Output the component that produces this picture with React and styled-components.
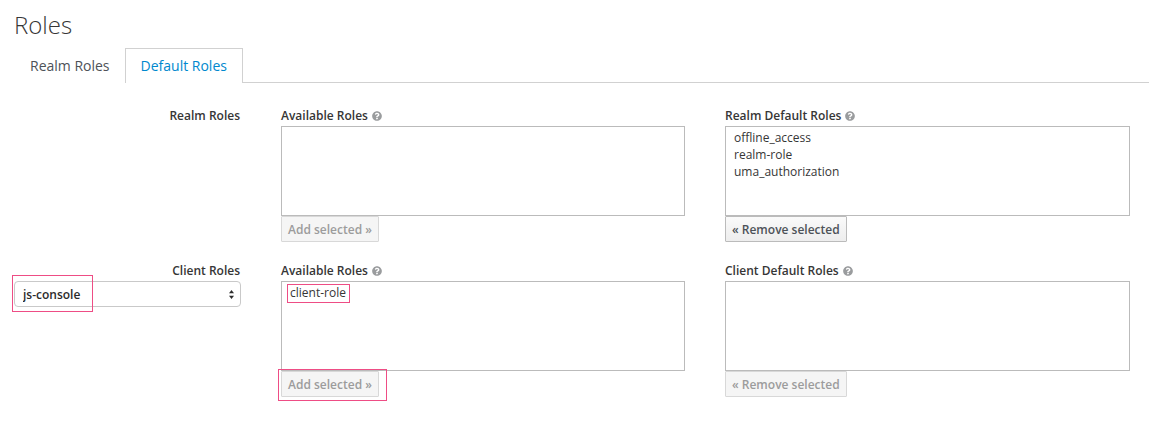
import styled, { createGlobalStyle } from "styled-components";
import { FaQuestionCircle } from "react-icons/fa";

const GlobalStyle = createGlobalStyle`
  body {
    margin: 0;
    background: #fff;
    font-family: "Open Sans", "Liberation Sans", sans-serif;
    color: #363636;
  }
`;

const rows = [
    {
        label: "Realm Roles",
        available: { title: "Available Roles", items: [], action: "Add selected", enabled: false },
        defaults: {
            title: "Realm Default Roles",
            items: ["offline_access", "realm-role", "uma_authorization"],
            action: "Remove selected",
            enabled: true,
        },
    },
    {
        label: "Client Roles",
        client: "js-console",
        available: {
            title: "Available Roles",
            items: ["client-role"],
            action: "Add selected",
            enabled: false,
            marked: true,
        },
        defaults: { title: "Client Default Roles", items: [], action: "Remove selected", enabled: false },
    },
];

function SelectArrows() {
    return (
        <ArrowIcon width="7" height="11" viewBox="0 0 7 11">
            <path d="M3.5 1 L6 4.2 L1 4.2 Z" fill="#2b2b2b" />
            <path d="M3.5 10 L6 6.8 L1 6.8 Z" fill="#2b2b2b" />
        </ArrowIcon>
    );
}

function RoleList({ side, marked }) {
    const isAdd = side.action.startsWith("Add");
    return (
        <Field>
            <FieldLabel>
                {side.title}
                <Help />
            </FieldLabel>
            <ListBox>
                {side.items.map((item) => (
                    <Option key={item}>
                        <Anchor>
                            {marked && <Highlight $t="0" $r="-4px" $b="-2px" $l="-3px" />}
                            {item}
                        </Anchor>
                    </Option>
                ))}
            </ListBox>
            <Anchor>
                {marked && <Highlight $t="-2px" $r="-8px" $b="-4px" $l="-3px" />}
                <ActionButton disabled={!side.enabled} $enabled={side.enabled}>
                    {isAdd ? `${side.action} »` : `« ${side.action}`}
                </ActionButton>
            </Anchor>
        </Field>
    );
}

export default function App() {
    return (
        <Page>
            <GlobalStyle />
            <Title>Roles</Title>
            <Tabs>
                <Tab>Realm Roles</Tab>
                <Tab $active>Default Roles</Tab>
            </Tabs>
            <Form>
                {rows.map((row) => (
                    <Row key={row.label}>
                        <LabelCell>
                            <RowLabel>{row.label}</RowLabel>
                            {row.client && (
                                <SelectWrap>
                                    <Highlight $t="-6px" $b="-5px" $l="-2px" $w="79px" />
                                    <ClientSelect defaultValue={row.client}>
                                        <option>{row.client}</option>
                                    </ClientSelect>
                                    <SelectArrows />
                                </SelectWrap>
                            )}
                        </LabelCell>
                        <RoleList side={row.available} marked={row.available.marked} />
                        <RoleList side={row.defaults} />
                    </Row>
                ))}
            </Form>
        </Page>
    );
}

const Page = styled.div`
  padding: 0 0 40px 14px;
`;

const Title = styled.h1`
  margin: 12px 0 10px;
  font-size: 24px;
  line-height: 26px;
  font-weight: 300;
  color: #363636;
`;

const Tabs = styled.div`
  display: flex;
  border-bottom: 1px solid #d1d1d1;
`;

const Tab = styled.div`
  margin-bottom: -1px;
  padding: 8px 15px 8px;
  font-size: 14px;
  line-height: 18px;
  border: 1px solid ${({ $active }) => ($active ? "#d1d1d1" : "transparent")};
  border-bottom: none;
  background: #fff;
  color: ${({ $active }) => ($active ? "#0088ce" : "#4d5258")};
  cursor: pointer;
  &:first-child {
    padding-right: 14px;
  }
`;

const Form = styled.div`
  padding-top: 24px;
  display: flex;
  flex-direction: column;
  gap: 20px;
`;

const Row = styled.div`
  display: grid;
  grid-template-columns: 227px 404px 405px;
  column-gap: 40px;
`;

const LabelCell = styled.div`
  display: flex;
  flex-direction: column;
`;

const RowLabel = styled.div`
  font-size: 12px;
  line-height: 17px;
  font-weight: 600;
  text-align: right;
  padding-right: 1px;
  margin-bottom: 2px;
`;

const SelectWrap = styled.div`
  position: relative;
`;

const ClientSelect = styled.select`
  appearance: none;
  display: block;
  width: 100%;
  height: 26px;
  box-sizing: border-box;
  padding: 0 20px 0 8px;
  border: 1px solid #c9c9c9;
  border-radius: 4px;
  background: #fff;
  font-family: "Open Sans", "Liberation Sans", sans-serif;
  font-size: 12px;
  font-weight: 600;
  color: #2b2b2b;
  outline: none;
`;

const ArrowIcon = styled.svg`
  position: absolute;
  right: 6px;
  top: 8px;
  pointer-events: none;
`;

const Field = styled.div`
  display: flex;
  flex-direction: column;
  align-items: flex-start;
`;

const FieldLabel = styled.div`
  display: flex;
  align-items: center;
  gap: 4px;
  font-size: 12px;
  line-height: 17px;
  font-weight: 600;
  margin-bottom: 2px;
`;

const Help = styled(FaQuestionCircle)`
  width: 10px;
  height: 10px;
  color: #9a9c9e;
`;

const ListBox = styled.div`
  width: 100%;
  height: 90px;
  box-sizing: border-box;
  border: 1px solid #bbb;
  padding: 2px 8px;
  background: #fff;
`;

const Option = styled.div`
  font-size: 12px;
  line-height: 17px;
  color: #363636;
`;

const Anchor = styled.span`
  position: relative;
  display: inline-flex;
`;

const Highlight = styled.span`
  position: absolute;
  top: ${({ $t }) => $t || "auto"};
  right: ${({ $r }) => $r || "auto"};
  bottom: ${({ $b }) => $b || "auto"};
  left: ${({ $l }) => $l || "auto"};
  width: ${({ $w }) => $w || "auto"};
  border: 1.5px solid #ee4d85;
  pointer-events: none;
  z-index: 2;
`;

const ActionButton = styled.button`
  display: block;
  height: 26px;
  box-sizing: border-box;
  padding: 0 6px;
  font-family: "Open Sans", "Liberation Sans", sans-serif;
  font-size: 12px;
  font-weight: 600;
  border: 1px solid ${({ $enabled }) => ($enabled ? "#bbb" : "#d8d8d8")};
  border-radius: 1px;
  color: ${({ $enabled }) => ($enabled ? "#4d5258" : "#9c9c9c")};
  background: ${({ $enabled }) =>
        $enabled ? "linear-gradient(#fafafa, #ededed)" : "#f5f5f5"};
  cursor: ${({ $enabled }) => ($enabled ? "pointer" : "default")};
`;
